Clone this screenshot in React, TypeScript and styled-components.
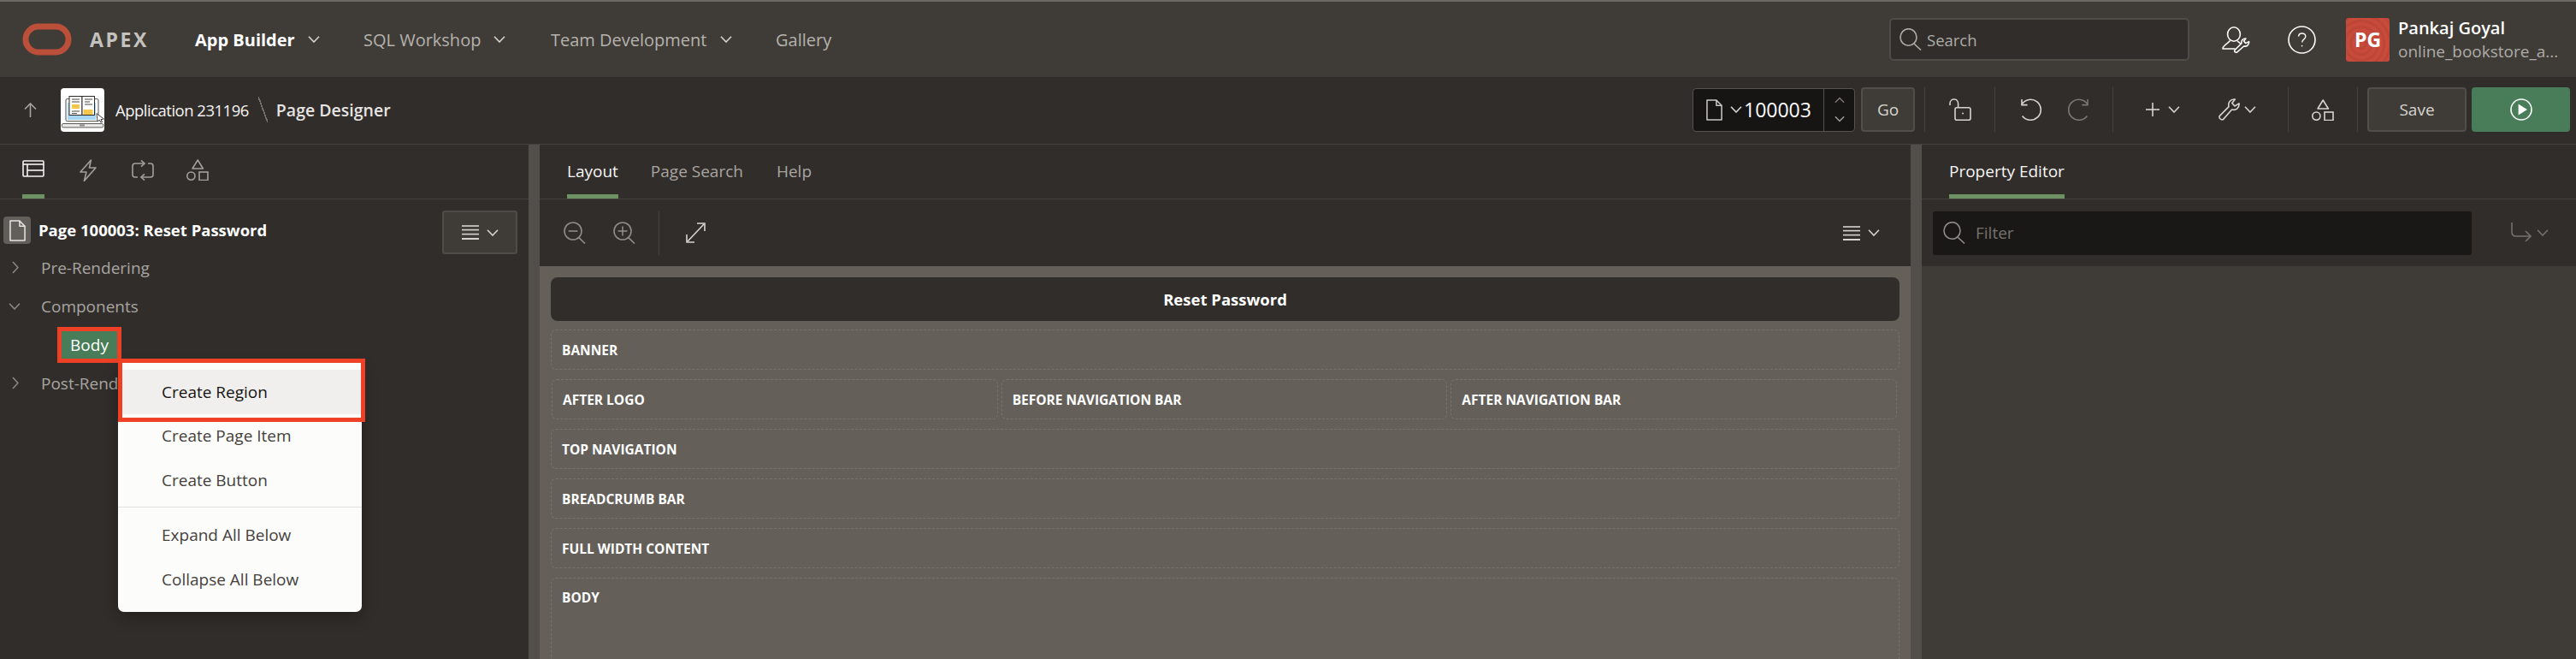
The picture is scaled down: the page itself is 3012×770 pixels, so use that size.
import React from 'react';
import styled, { createGlobalStyle } from 'styled-components';

const GlobalStyle = createGlobalStyle`
    html, body {
        margin: 0;
        padding: 0;
        background: #312d2a;
    }
    * {
        box-sizing: border-box;
    }
`;

const font = `"Open Sans", "Noto Sans", sans-serif`;

/* ---------- icons ---------- */

const Svg = styled.svg<{ $w: number; $h: number; $ml?: number; $color?: string }>`
    display: block;
    flex: none;
    width: ${(p) => p.$w}px;
    height: ${(p) => p.$h}px;
    margin-left: ${(p) => p.$ml ?? 0}px;
    color: ${(p) => p.$color ?? '#d6d4d1'};
    fill: none;
    stroke: currentColor;
    stroke-width: 1.6;
`;

type IconProps = { ml?: number; color?: string };

function Chevron({ ml, color, w = 14 }: IconProps & { w?: number }) {
    return (
        <Svg $w={w} $h={8} $ml={ml} $color={color} viewBox="0 0 14 8">
            <polyline points="1,0.8 7,7 13,0.8" />
        </Svg>
    );
}

function SearchGlyph({ ml, color }: IconProps) {
    return (
        <Svg $w={26} $h={26} $ml={ml} $color={color} viewBox="0 0 26 26">
            <ellipse cx="10.5" cy="10.5" rx="9.5" ry="9.8" />
            <line x1="17" y1="18" x2="25" y2="25.5" />
        </Svg>
    );
}

function UserWrench() {
    return (
        <Svg $w={33} $h={31} $ml={0} $color="#fbfbfa" viewBox="0 0 33 31" strokeLinejoin="round">
            <ellipse cx="14" cy="9" rx="7.4" ry="8.2" />
            <path d="M9.5 16.5 C8 19 4 20 1.2 24.5 L1 26 H15.5" />
            <path d="M18 17 C20 18 21 19 22.5 21" />
            <path d="M15 29.5 L14.6 28 L23 19.5 C22.4 16.5 24.4 13.8 28 14 L25.6 17 L27.6 19.6 L31.6 17.6 C32 21 29.4 23.6 25.6 23 L17 30.6 Z" />
        </Svg>
    );
}

function HelpGlyph() {
    return (
        <Svg $w={33} $h={33} $ml={44} $color="#fbfbfa" viewBox="0 0 33 33">
            <circle cx="16.5" cy="16.5" r="15.5" />
            <path d="M12.6 12.6 C12.8 7.6 20.8 7.8 20.8 12.8 C20.8 15.8 16.6 16 16.6 19.6" strokeWidth="1.4" />
            <circle cx="16.6" cy="23.6" r="0.9" fill="currentColor" stroke="none" />
        </Svg>
    );
}

function ArrowUp() {
    return (
        <Svg $w={15} $h={17} $ml={0} $color="#a9a6a2" viewBox="0 0 15 17" strokeWidth="2">
            <line x1="7.5" y1="1" x2="7.5" y2="17" />
            <polyline points="1,7.5 7.5,1 14,7.5" />
        </Svg>
    );
}

function FileGlyph({ w, h, ml, color }: IconProps & { w: number; h: number }) {
    return (
        <Svg $w={w} $h={h} $ml={ml} $color={color} viewBox="0 0 20 26" strokeLinejoin="round">
            <path d="M1 1 H12.5 L19 7.5 V25 H1 Z" />
            <path d="M12.5 1 V7.5 H19" />
        </Svg>
    );
}

function Unlock({ ml }: IconProps) {
    return (
        <Svg $w={26} $h={26} $ml={ml} viewBox="0 0 26 26">
            <rect x="7" y="10.8" width="18" height="14.4" rx="2" />
            <path d="M1 8 V6 C1 -0.6 10.6 -0.6 10.6 6 V10.8" />
            <circle cx="16" cy="17.6" r="1" fill="currentColor" stroke="none" />
        </Svg>
    );
}

function Undo({ ml, flip, color }: IconProps & { flip?: boolean }) {
    return (
        <Svg
            $w={25}
            $h={26}
            $ml={ml}
            $color={color}
            viewBox="0 0 25 26"
            style={flip ? { transform: 'scaleX(-1)' } : undefined}
        >
            <path d="M2 7 A12 12 0 1 1 2.6 20.4" />
            <polyline points="2,1 2,7.6 8.6,7.6" />
        </Svg>
    );
}

function Plus({ ml }: IconProps) {
    return (
        <Svg $w={16} $h={16} $ml={ml} viewBox="0 0 16 16">
            <line x1="8" y1="0" x2="8" y2="16" />
            <line x1="0" y1="8" x2="16" y2="8" />
        </Svg>
    );
}

function Wrench({ ml }: IconProps) {
    return (
        <Svg $w={25} $h={26} $ml={ml} viewBox="0 0 25 26" strokeLinejoin="round">
            <path d="M1.2 20.6 L12 9.6 C10.8 4.6 14 0.4 19.4 1 L15.8 5.4 L19 9 L24 5.8 C24.6 10.8 20.6 14.4 15.6 13 L5.6 24.4 C3.6 26 0 23 1.2 20.6 Z" />
        </Svg>
    );
}

function Shapes({ ml, color }: IconProps) {
    return (
        <Svg $w={26} $h={25} $ml={ml} $color={color} viewBox="0 0 26 25">
            <path d="M13.2 1 L19.4 11 H7 Z" strokeLinejoin="round" />
            <circle cx="5.4" cy="19.6" r="4.6" />
            <rect x="15" y="15" width="10" height="9.6" />
        </Svg>
    );
}

function RunGlyph() {
    return (
        <Svg $w={26} $h={26} $color="#fff" viewBox="0 0 26 26">
            <circle cx="13" cy="13" r="12" />
            <path d="M9.6 6.4 L20 13 L9.6 19.6 Z" fill="currentColor" stroke="none" />
        </Svg>
    );
}

function TreeTab() {
    return (
        <Svg $w={26} $h={20} $color="#f4f3f2" viewBox="0 0 26 20">
            <rect x="1" y="1" width="24" height="18" rx="1" />
            <line x1="1" y1="5" x2="25" y2="5" />
            <line x1="6" y1="5" x2="6" y2="19" />
            <line x1="6" y1="12" x2="25" y2="12" />
        </Svg>
    );
}

function BoltTab({ ml }: IconProps) {
    return (
        <Svg $w={20} $h={26} $ml={ml} $color="#a3a09c" viewBox="0 0 20 26" strokeLinejoin="round">
            <path d="M13.4 1 L1 15 H8 L5.4 25.4 L19 10 H11.4 Z" />
        </Svg>
    );
}

function LoopTab({ ml }: IconProps) {
    return (
        <Svg $w={26} $h={24} $ml={ml} $color="#a3a09c" viewBox="0 0 26 24">
            <path d="M7 20 H4 C2 20 1 19 1 17 V7 C1 5 2 4 4 4 H15" />
            <polyline points="11,0.4 15,4 11,7.6" />
            <path d="M19 4 H22 C24 4 25 5 25 7 V17 C25 19 24 20 22 20 H11" />
            <polyline points="15,16.4 11,20 15,23.6" />
        </Svg>
    );
}

function ZoomGlyph({ ml, plus }: IconProps & { plus?: boolean }) {
    return (
        <Svg $w={26} $h={26} $ml={ml} $color="#8f8b87" viewBox="0 0 26 26">
            <circle cx="11" cy="11" r="10" />
            <line x1="17.6" y1="18.4" x2="25" y2="25.6" />
            <line x1="5.6" y1="11" x2="16.4" y2="11" />
            {plus && <line x1="11" y1="5.6" x2="11" y2="16.4" />}
        </Svg>
    );
}

function Expand({ ml }: IconProps) {
    return (
        <Svg $w={23} $h={24} $ml={ml} viewBox="0 0 23 24">
            <line x1="2" y1="22" x2="21" y2="2" />
            <polyline points="13,1 22,1 22,10" />
            <polyline points="1,14 1,23 10,23" />
        </Svg>
    );
}

function MenuLines({ ml }: IconProps) {
    return (
        <Svg $w={20} $h={17} $ml={ml} viewBox="0 0 20 17" strokeWidth="1.8">
            <line x1="0" y1="1" x2="20" y2="1" />
            <line x1="0" y1="5.6" x2="20" y2="5.6" />
            <line x1="0" y1="10.6" x2="20" y2="10.6" />
            <line x1="0" y1="16" x2="20" y2="16" strokeWidth="2" />
        </Svg>
    );
}

function GoToGlyph() {
    return (
        <Svg $w={24} $h={24} $ml={0} $color="#75716d" viewBox="0 0 24 24">
            <path d="M1 0 V11 C1 14 3 16 6 16 H23" />
            <polyline points="17,10 23,16 17,22" />
        </Svg>
    );
}

function ChevronRight() {
    return (
        <Svg $w={8} $h={15} $color="#8c8884" viewBox="0 0 8 15">
            <polyline points="1,1 7,7.5 1,14" />
        </Svg>
    );
}

function AppLogo() {
    return (
        <svg width="51" height="51" viewBox="0 0 51 51" style={{ display: 'block' }}>
            <rect x="6" y="12.6" width="38" height="26" rx="1.5" fill="#fff" stroke="#3c3a38" strokeWidth="0.9" />
            <rect x="8" y="17" width="33" height="20" fill="#a9d7f3" />
            <rect x="10" y="9.5" width="15" height="22" fill="#fff" stroke="#2e2c2a" strokeWidth="1" />
            <rect x="25" y="9.5" width="14.5" height="22" fill="#fff" stroke="#2e2c2a" strokeWidth="1" />
            <path d="M13 13h9M13 16h9M28 13h9M28 16h6M28 19h9M13 27h9M13 29.6h6" stroke="#35332f" strokeWidth="0.9" />
            <rect x="13" y="19" width="9" height="5" fill="#f5c84c" />
            <rect x="26.5" y="25" width="11" height="6" fill="#f5c84c" />
            <rect x="1.4" y="41.5" width="48.4" height="4.4" rx="1.5" fill="#e9e9e8" stroke="#4a4846" strokeWidth="0.9" />
            <rect x="22" y="42.4" width="6" height="2" fill="#8b8987" />
            <path d="M42 29.6 L50.4 36 L47 36.6 L48.6 39.6 L46.8 40 L45.4 37.2 L43 39 Z" fill="#fff" stroke="#2e2c2a" strokeWidth="0.9" />
        </svg>
    );
}

function OracleLogo() {
    return (
        <svg width="58" height="38" viewBox="0 0 58 38" style={{ display: 'block', flex: 'none' }}>
            <rect x="4" y="4" width="50" height="30" rx="15" fill="none" stroke="#bb4f3a" strokeWidth="7" />
        </svg>
    );
}

/* ---------- header ---------- */

const Page = styled.div`
    width: 3012px;
    height: 770px;
    overflow: hidden;
    display: flex;
    flex-direction: column;
    font-family: ${font};
    background: #312d2a;
`;

const TopBar = styled.header`
    flex: none;
    height: 90px;
    border-top: 2px solid #6b6865;
    background: #3f3c37;
    display: flex;
    align-items: center;
    padding-left: 26px;
`;

const Brand = styled.span`
    margin-left: 21px;
    width: 123px;
    font-size: 23px;
    font-weight: 700;
    letter-spacing: 2.6px;
    color: #c4c2bf;
`;

const NavItem = styled.a<{ $active?: boolean; $w: number }>`
    display: flex;
    align-items: center;
    gap: 15px;
    width: ${(p) => p.$w}px;
    font-size: 20px;
    font-weight: ${(p) => (p.$active ? 700 : 400)};
    color: ${(p) => (p.$active ? '#ffffff' : '#b5b2ae')};
    white-space: nowrap;
`;

const HeaderRight = styled.div`
    margin-left: auto;
    display: flex;
    align-items: center;
`;

const SearchBox = styled.div`
    width: 351px;
    height: 50px;
    margin-right: 38px;
    padding-left: 10px;
    display: flex;
    align-items: center;
    gap: 6px;
    background: #312d2a;
    border: 2px solid #4f4b47;
    border-radius: 5px;
    font-size: 18.5px;
    color: #aeaba7;
`;

const Avatar = styled.div`
    width: 51px;
    height: 51px;
    margin-left: 35px;
    border-radius: 3px;
    display: flex;
    align-items: center;
    justify-content: center;
    color: #fff;
    font-size: 23px;
    font-weight: 700;
    background: repeating-radial-gradient(circle at 18px 30px, #c74a3c 0 4px, #bd4637 4px 7px);
`;

const UserInfo = styled.div`
    width: 218px;
    padding-left: 10px;
    display: flex;
    flex-direction: column;
    gap: 1px;
`;

const UserName = styled.span`
    font-size: 20px;
    font-weight: 600;
    line-height: 26px;
    color: #fff;
`;

const UserApp = styled.span`
    font-size: 19px;
    line-height: 26px;
    color: #aeaba7;
`;

/* ---------- designer toolbar ---------- */

const Toolbar = styled.div`
    flex: none;
    height: 79px;
    display: flex;
    align-items: center;
    padding: 0 7px 2px 28px;
    background: #312d2a;
    border-bottom: 1px solid #45413d;
`;

const AppIcon = styled.div`
    width: 51px;
    height: 51px;
    margin-left: 28px;
    background: #fff;
    border-radius: 4px;
`;

const Crumb = styled.span<{ $strong?: boolean }>`
    font-size: ${(p) => (p.$strong ? 19.5 : 18.5)}px;
    letter-spacing: ${(p) => (p.$strong ? 0 : -0.5)}px;
    font-weight: ${(p) => (p.$strong ? 600 : 400)};
    color: ${(p) => (p.$strong ? '#e6e4e2' : '#f5f4f3')};
    white-space: nowrap;
`;

const AppCrumb = styled(Crumb)`
    margin-left: 13px;
`;

const CrumbSlash = styled.span`
    width: 11px;
    height: 30px;
    margin: 0 10px 0 11px;
    background: linear-gradient(to top right, transparent 46%, #75716d 46%, #75716d 54%, transparent 54%);
`;

const ToolbarRight = styled.div`
    margin-left: auto;
    display: flex;
    align-items: center;
`;

const PageSelector = styled.div`
    width: 190px;
    height: 51px;
    display: flex;
    align-items: center;
    padding-left: 15px;
    background: #161513;
    border: 1px solid #56524e;
    border-radius: 4px;
`;

const PageNumber = styled.span`
    margin-left: 2px;
    width: 93px;
    font-size: 23px;
    color: #fff;
`;

const Spinner = styled.div`
    align-self: stretch;
    flex: 1;
    display: flex;
    flex-direction: column;
    align-items: center;
    justify-content: center;
    gap: 14px;
    border-left: 1px solid #56524e;
`;

const FlipUp = styled.span`
    display: block;
    transform: scaleY(-1);
`;

const ToolSep = styled.span<{ $ml: number }>`
    flex: none;
    width: 1px;
    height: 52px;
    margin-left: ${(p) => p.$ml}px;
    background: #45413d;
`;

const ToolButton = styled.button<{ $w: number; $ml: number; $primary?: boolean }>`
    width: ${(p) => p.$w}px;
    height: 52px;
    margin-left: ${(p) => p.$ml}px;
    padding: 0;
    display: flex;
    align-items: center;
    justify-content: center;
    font-family: ${font};
    font-size: 19px;
    color: #d6d4d1;
    background: ${(p) => (p.$primary ? '#497c58' : '#3f3c37')};
    border: ${(p) => (p.$primary ? 'none' : '2px solid #524e4a')};
    border-radius: 4px;
`;

/* ---------- workspace ---------- */

const Workspace = styled.div`
    flex: 1;
    min-height: 0;
    display: flex;
`;

const Splitter = styled.div`
    flex: none;
    width: 13px;
    background: #524e49;
`;

const Panel = styled.section<{ $w?: number }>`
    position: relative;
    display: flex;
    flex-direction: column;
    min-width: 0;
    flex: ${(p) => (p.$w ? `0 0 ${p.$w}px` : '1')};
`;

const TabBar = styled.div`
    flex: none;
    height: 64px;
    display: flex;
    border-bottom: 1px solid #45413d;
`;

const Tab = styled.a<{ $active?: boolean; $ml: number }>`
    margin-left: ${(p) => p.$ml}px;
    height: 63px;
    padding-top: 3px;
    display: flex;
    align-items: center;
    font-size: 19px;
    color: ${(p) => (p.$active ? '#f6f5f4' : '#a8a5a1')};
    border-bottom: 5px solid ${(p) => (p.$active ? '#6e9163' : 'transparent')};
`;

const IconTab = styled.div`
    margin-left: 26px;
    height: 63px;
    padding-bottom: 2px;
    display: flex;
    align-items: center;
    border-bottom: 5px solid #6e9163;
`;

const IconTabRest = styled.div`
    height: 63px;
    padding-bottom: 4px;
    display: flex;
    align-items: center;
`;

/* left: rendering tree */

const PageHead = styled.div`
    flex: none;
    height: 57px;
    padding: 13px 13px 0 4px;
    display: flex;
    align-items: flex-start;
`;

const PageBadge = styled.div`
    width: 32px;
    height: 32px;
    margin-top: 7px;
    display: flex;
    align-items: center;
    justify-content: center;
    background: #625e5a;
    border-radius: 4px;
`;

const PageTitle = styled.span`
    margin: 7px 0 0 9px;
    font-size: 18.5px;
    line-height: 32px;
    font-weight: 700;
    color: #fff;
`;

const MenuButton = styled.button`
    margin-left: auto;
    width: 88px;
    height: 51px;
    padding: 0;
    display: flex;
    align-items: center;
    justify-content: center;
    gap: 9px;
    background: #3f3c37;
    border: 2px solid #4f4b47;
    border-radius: 3px;
`;

const TreeRow = styled.div`
    flex: none;
    height: 45px;
    display: flex;
    align-items: center;
    font-size: 19px;
    color: #a8a5a1;
`;

const Twisty = styled.span`
    width: 48px;
    padding-left: 14px;
    display: flex;
    align-items: center;
`;

const TreeSelected = styled.span`
    margin-left: 72px;
    width: 65px;
    height: 32px;
    line-height: 32px;
    text-align: center;
    color: #fff;
    background: #497c58;
    outline: 5px solid #ee4025;
`;

const ContextMenu = styled.div`
    position: absolute;
    left: 138px;
    top: 255px;
    width: 285px;
    height: 291px;
    padding-top: 8px;
    background: #fcfcfb;
    border-radius: 0 0 7px 7px;
    box-shadow: 0 6px 18px rgba(0, 0, 0, 0.3);
`;

const MenuItem = styled.div<{ $focused?: boolean }>`
    height: 51.5px;
    padding-left: 51px;
    display: flex;
    align-items: center;
    font-size: 19px;
    color: ${(p) => (p.$focused ? '#161513' : '#45413d')};
    background: ${(p) => (p.$focused ? '#f1efed' : 'transparent')};
`;

const MenuDivider = styled.div`
    height: 1px;
    margin: 5px 0 7px;
    background: #e2e0de;
`;

const Callout = styled.div`
    position: absolute;
    left: 0;
    right: -4px;
    top: -5px;
    height: 74px;
    border: 5px solid #ee4025;
`;

/* center: layout */

const SubBar = styled.div`
    flex: none;
    height: 78px;
    display: flex;
    align-items: center;
`;

const SubBarSep = styled.span`
    width: 1px;
    height: 51px;
    margin-left: 27px;
    background: #45413d;
`;

const SubBarEnd = styled.div`
    margin-left: auto;
    padding-right: 36px;
    display: flex;
    align-items: center;
    gap: 9px;
`;

const Canvas = styled.div`
    flex: 1;
    min-height: 0;
    display: flex;
    flex-direction: column;
    gap: 11px;
    padding: 13px 13px 0;
    background: #655f5a;
    overflow: hidden;
`;

const TitleBar = styled.div`
    flex: none;
    height: 51px;
    margin-bottom: -1px;
    display: flex;
    align-items: center;
    justify-content: center;
    background: #312d2a;
    border-radius: 8px;
    font-size: 18.5px;
    font-weight: 700;
    color: #fff;
`;

const Slot = styled.div`
    flex: none;
    height: 47px;
    padding-left: 12px;
    display: flex;
    align-items: center;
    border: 1px dashed #78736e;
    border-radius: 6px;
    font-size: 15.5px;
    font-weight: 700;
    color: #fff;
    white-space: nowrap;
`;

const SlotRow = styled.div`
    flex: none;
    margin: 0 3px 0 1px;
    display: grid;
    grid-template-columns: repeat(3, 1fr);
    gap: 4px;
`;

const BodySlot = styled(Slot)`
    height: 300px;
    align-items: flex-start;
    line-height: 45px;
`;

/* right: property editor */

const FilterRow = styled.div`
    flex: none;
    height: 78px;
    display: flex;
    align-items: center;
    padding-left: 13px;
    background: #312d2a;
`;

const FilterInput = styled.div`
    width: 630px;
    height: 51px;
    padding-left: 12px;
    display: flex;
    align-items: center;
    gap: 12px;
    background: #1a1816;
    border-radius: 3px;
    font-size: 19px;
    color: #76726e;
`;

const FilterAction = styled.div`
    margin-left: 46px;
    display: flex;
    align-items: center;
    gap: 6px;
`;

const PropertyBody = styled.div`
    flex: 1;
    background: #3f3c37;
`;

export default function App() {
    return (
        <Page>
            <GlobalStyle />
            <TopBar>
                <OracleLogo />
                <Brand>APEX</Brand>
                <NavItem $active $w={197}>
                    App Builder <Chevron />
                </NavItem>
                <NavItem $w={219}>
                    SQL Workshop <Chevron />
                </NavItem>
                <NavItem $w={263}>
                    Team Development <Chevron />
                </NavItem>
                <NavItem $w={80}>Gallery</NavItem>
                <HeaderRight>
                    <SearchBox>
                        <SearchGlyph color="#aeaba7" />
                        Search
                    </SearchBox>
                    <UserWrench />
                    <HelpGlyph />
                    <Avatar>PG</Avatar>
                    <UserInfo>
                        <UserName>Pankaj Goyal</UserName>
                        <UserApp>online_bookstore_a...</UserApp>
                    </UserInfo>
                </HeaderRight>
            </TopBar>

            <Toolbar>
                <ArrowUp />
                <AppIcon>
                    <AppLogo />
                </AppIcon>
                <AppCrumb>Application 231196</AppCrumb>
                <CrumbSlash />
                <Crumb $strong>Page Designer</Crumb>
                <ToolbarRight>
                    <PageSelector>
                        <FileGlyph w={19} h={25} color="#c9c7c4" />
                        <Chevron ml={9} />
                        <PageNumber>100003</PageNumber>
                        <Spinner>
                            <FlipUp>
                                <Chevron w={12} color="#7d7975" />
                            </FlipUp>
                            <Chevron w={12} color="#a5a29e" />
                        </Spinner>
                    </PageSelector>
                    <ToolButton $w={63} $ml={7}>
                        Go
                    </ToolButton>
                    <ToolSep $ml={11} />
                    <Unlock ml={28} />
                    <ToolSep $ml={27} />
                    <Undo ml={29} />
                    <Undo ml={31} flip color="#7b7773" />
                    <ToolSep $ml={27} />
                    <Plus ml={38} />
                    <Chevron ml={10} />
                    <Wrench ml={45} />
                    <Chevron ml={5} />
                    <ToolSep $ml={37} />
                    <Shapes ml={27} />
                    <ToolSep $ml={27} />
                    <ToolButton $w={116} $ml={11}>
                        Save
                    </ToolButton>
                    <ToolButton $w={115} $ml={6} $primary>
                        <RunGlyph />
                    </ToolButton>
                </ToolbarRight>
            </Toolbar>

            <Workspace>
                <Panel $w={618}>
                    <TabBar>
                        <IconTab>
                            <TreeTab />
                        </IconTab>
                        <IconTabRest>
                            <BoltTab ml={41} />
                            <LoopTab ml={41} />
                            <Shapes ml={38} color="#a3a09c" />
                        </IconTabRest>
                    </TabBar>
                    <PageHead>
                        <PageBadge>
                            <FileGlyph w={19} h={25} color="#e6e4e2" />
                        </PageBadge>
                        <PageTitle>Page 100003: Reset Password</PageTitle>
                        <MenuButton>
                            <MenuLines />
                            <Chevron />
                        </MenuButton>
                    </PageHead>
                    <TreeRow>
                        <Twisty>
                            <ChevronRight />
                        </Twisty>
                        Pre-Rendering
                    </TreeRow>
                    <TreeRow>
                        <Twisty>
                            <Chevron ml={-4} color="#8c8884" />
                        </Twisty>
                        Components
                    </TreeRow>
                    <TreeRow>
                        <TreeSelected>Body</TreeSelected>
                    </TreeRow>
                    <TreeRow>
                        <Twisty>
                            <ChevronRight />
                        </Twisty>
                        Post-Rendering
                    </TreeRow>
                    <ContextMenu>
                        <MenuItem $focused>Create Region</MenuItem>
                        <MenuItem>Create Page Item</MenuItem>
                        <MenuItem>Create Button</MenuItem>
                        <MenuDivider />
                        <MenuItem>Expand All Below</MenuItem>
                        <MenuItem>Collapse All Below</MenuItem>
                        <Callout />
                    </ContextMenu>
                </Panel>

                <Splitter />

                <Panel>
                    <TabBar>
                        <Tab $active $ml={32}>
                            Layout
                        </Tab>
                        <Tab $ml={38}>Page Search</Tab>
                        <Tab $ml={39}>Help</Tab>
                    </TabBar>
                    <SubBar>
                        <ZoomGlyph ml={28} />
                        <ZoomGlyph ml={32} plus />
                        <SubBarSep />
                        <Expand ml={31} />
                        <SubBarEnd>
                            <MenuLines />
                            <Chevron />
                        </SubBarEnd>
                    </SubBar>
                    <Canvas>
                        <TitleBar>Reset Password</TitleBar>
                        <Slot>BANNER</Slot>
                        <SlotRow>
                            <Slot>AFTER LOGO</Slot>
                            <Slot>BEFORE NAVIGATION BAR</Slot>
                            <Slot>AFTER NAVIGATION BAR</Slot>
                        </SlotRow>
                        <Slot>TOP NAVIGATION</Slot>
                        <Slot>BREADCRUMB BAR</Slot>
                        <Slot>FULL WIDTH CONTENT</Slot>
                        <BodySlot>BODY</BodySlot>
                    </Canvas>
                </Panel>

                <Splitter />

                <Panel $w={765}>
                    <TabBar>
                        <Tab $active $ml={32}>
                            Property Editor
                        </Tab>
                    </TabBar>
                    <FilterRow>
                        <FilterInput>
                            <SearchGlyph color="#8f8b87" />
                            Filter
                        </FilterInput>
                        <FilterAction>
                            <GoToGlyph />
                            <Chevron color="#75716d" />
                        </FilterAction>
                    </FilterRow>
                    <PropertyBody />
                </Panel>
            </Workspace>
        </Page>
    );
}
